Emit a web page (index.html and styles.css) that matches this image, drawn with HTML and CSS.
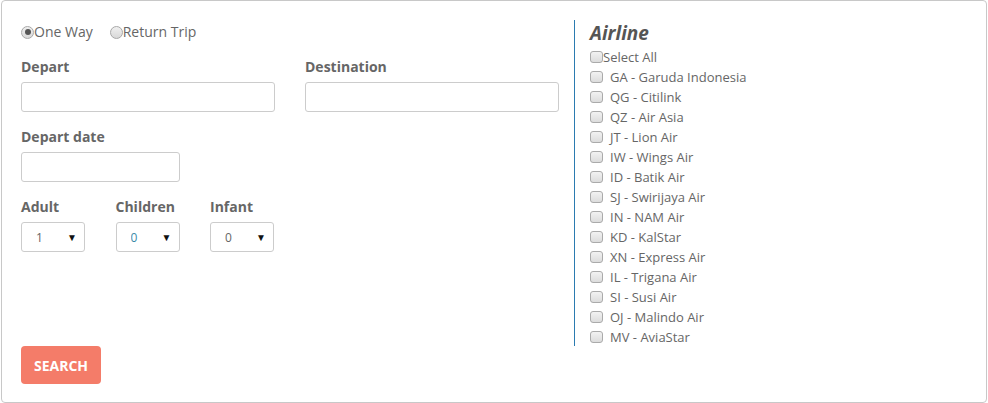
FILE: index.html
```html
<!DOCTYPE html>
<html>
<head>
<meta charset="utf-8">
<link rel="stylesheet" href="styles.css">
</head>
<body>
<div class="box">
  <form class="left">
    <div class="trip">
      <label class="radio"><input type="radio" name="trip" checked>One Way</label>
      <label class="radio"><input type="radio" name="trip">Return Trip</label>
    </div>
    <div class="pair">
      <div class="field">
        <label class="lbl">Depart</label>
        <input class="text" type="text">
      </div>
      <div class="field">
        <label class="lbl">Destination</label>
        <input class="text" type="text">
      </div>
    </div>
    <div class="field date">
      <label class="lbl">Depart date</label>
      <input class="text" type="text">
    </div>
    <div class="pax">
      <div class="field">
        <label class="lbl">Adult</label>
        <div class="sel"><select><option>1</option></select><span class="arrow">▼</span></div>
      </div>
      <div class="field">
        <label class="lbl">Children</label>
        <div class="sel"><select class="blue"><option>0</option></select><span class="arrow">▼</span></div>
      </div>
      <div class="field">
        <label class="lbl">Infant</label>
        <div class="sel"><select><option>0</option></select><span class="arrow">▼</span></div>
      </div>
    </div>
    <div class="spacer"></div>
    <button type="button" class="btn">SEARCH</button>
  </form>
  <div class="right">
    <div class="airbox">
      <h3 class="title">Airline</h3>
      <label class="all"><input type="checkbox">Select All</label>
      <ul class="list">
        <li><label><input type="checkbox"><span>GA - Garuda Indonesia</span></label></li>
        <li><label><input type="checkbox"><span>QG - Citilink</span></label></li>
        <li><label><input type="checkbox"><span>QZ - Air Asia</span></label></li>
        <li><label><input type="checkbox"><span>JT - Lion Air</span></label></li>
        <li><label><input type="checkbox"><span>IW - Wings Air</span></label></li>
        <li><label><input type="checkbox"><span>ID - Batik Air</span></label></li>
        <li><label><input type="checkbox"><span>SJ - Swirijaya Air</span></label></li>
        <li><label><input type="checkbox"><span>IN - NAM Air</span></label></li>
        <li><label><input type="checkbox"><span>KD - KalStar</span></label></li>
        <li><label><input type="checkbox"><span>XN - Express Air</span></label></li>
        <li><label><input type="checkbox"><span>IL - Trigana Air</span></label></li>
        <li><label><input type="checkbox"><span>SI - Susi Air</span></label></li>
        <li><label><input type="checkbox"><span>OJ - Malindo Air</span></label></li>
        <li><label><input type="checkbox"><span>MV - AviaStar</span></label></li>
      </ul>
    </div>
  </div>
</div>
</body>
</html>
```
FILE: styles.css
```css
* { box-sizing: border-box; }
html, body { margin: 0; padding: 0; background: #fff; }
body {
  font-family: "Open Sans", "Liberation Sans", sans-serif;
  font-size: 14px;
  color: #666;
}
.box {
  margin-left: 1px;
  width: 986px;
  height: 403px;
  border: 1px solid #c8c8c8;
  border-radius: 4px;
  display: flex;
  padding: 0 0 0 19px;
}
.left {
  width: 538px;
  display: flex;
  flex-direction: column;
  padding-top: 21px;
  padding-bottom: 18px;
  margin: 0;
}
.trip { display: flex; gap: 17px; height: 20px; align-items: center; }
.radio { display: flex; align-items: center; line-height: 20px; }
.radio input {
  -webkit-appearance: none;
  appearance: none;
  width: 13px; height: 13px; margin: 0;
  border: 1px solid #a8a8a8;
  border-radius: 50%;
  background: linear-gradient(#f0f0f0, #d8d8d8);
  position: relative;
}
.radio input:checked::after {
  content: "";
  position: absolute;
  left: 2.5px; top: 2.5px;
  width: 6px; height: 6px;
  border-radius: 50%;
  background: #555;
}
.pair { display: flex; gap: 30px; margin-top: 15px; }
.pair .field { width: 254px; }
.field { display: flex; flex-direction: column; }
.lbl {
  font-weight: bold;
  line-height: 20px;
  height: 20px;
  margin-bottom: 5px;
}
.text {
  height: 30px;
  border: 1px solid #ccc;
  border-radius: 3px;
  font: inherit;
  padding: 0 8px;
}
.date { margin-top: 15px; width: 159px; }
.pax { display: flex; gap: 30.5px; margin-top: 15px; }
.pax .field { width: 64px; }
.sel { position: relative; width: 64px; height: 30px; }
.sel select {
  -webkit-appearance: none;
  appearance: none;
  width: 64px; height: 30px;
  border: 1px solid #ccc;
  border-radius: 3px;
  background: #fff;
  font-family: "Open Sans", "Liberation Sans", sans-serif;
  font-size: 12px;
  color: #666;
  padding: 0 0 0 14px;
}
.sel select.blue { color: #3c8aa8; }
.arrow {
  position: absolute;
  right: 8px; top: 9px;
  font-size: 10px;
  line-height: 12px;
  color: #111;
  pointer-events: none;
}
.spacer { flex: 1; }
.btn {
  width: 80px; height: 38px;
  background: #f47c69;
  color: #fff;
  border: none;
  border-radius: 4px;
  font-family: "Open Sans", "Liberation Sans", sans-serif;
  font-weight: bold;
  font-size: 14px;
  padding: 0;
}
.right { padding-top: 19px; margin-left: 15px; }
.airbox {
  border-left: 1px solid #2b7bb0;
  padding-left: 15px;
  height: 326px;
  width: 300px;
}
.title {
  margin: 0;
  font-size: 19px;
  font-weight: bold;
  font-style: italic;
  color: #555;
  line-height: 26px;
}
.all { display: flex; align-items: center; line-height: 20px; margin-top: 1px; font-size: 13px; }
input[type=checkbox] {
  -webkit-appearance: none;
  appearance: none;
  width: 13px; height: 12px; margin: 0;
  border: 1px solid #aaa;
  border-radius: 3px;
  background: linear-gradient(#f2f2f2, #dcdcdc);
  flex: none;
}
.list { list-style: none; margin: 0; padding: 0; font-size: 13px; }
.list li { height: 20px; }
.list label { display: flex; align-items: center; line-height: 20px; }
.list label span { margin-left: 7px; }
.list input { margin-left: 0; }
```
